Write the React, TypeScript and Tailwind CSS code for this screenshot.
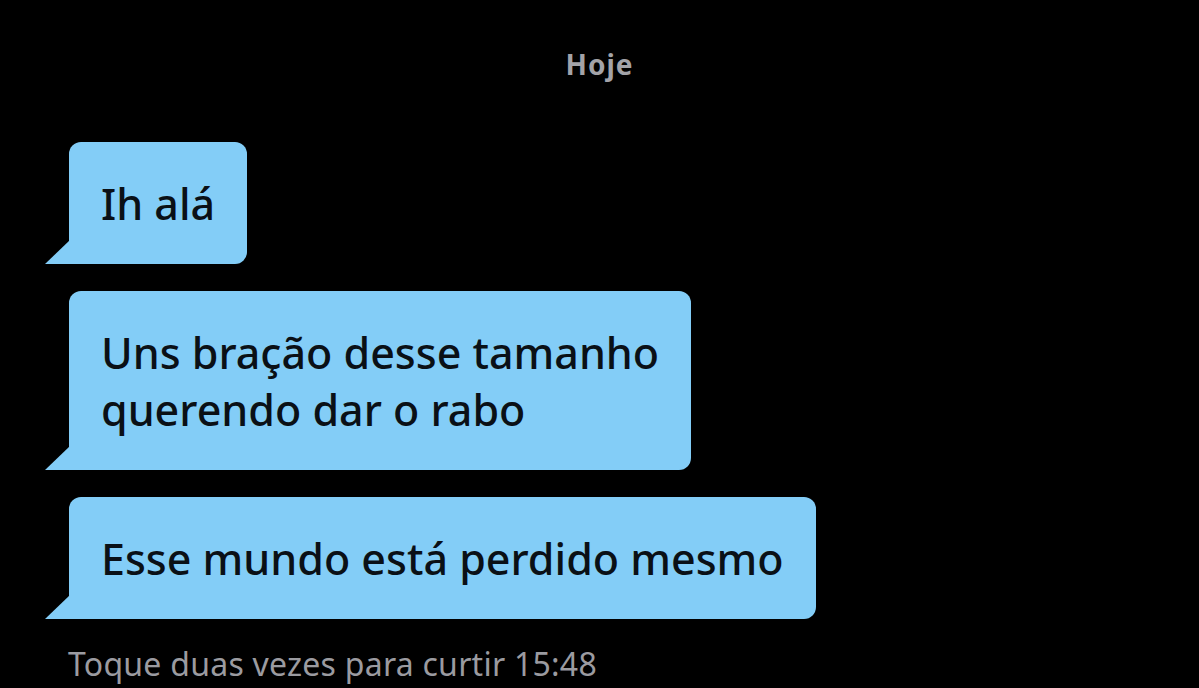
import React from "react";

function Bubble({ children }: { children: React.ReactNode }) {
  return (
    <div className="relative self-start">
      <div className="rounded-[12px] rounded-bl-none bg-[#83cdf7] px-[32px] pt-[33px] pb-[32px] text-[43px] leading-[57px] font-medium text-[#0a1016]">
        {children}
      </div>
      <svg
        className="absolute bottom-0 left-[-24px]"
        width="25"
        height="24"
        viewBox="0 0 25 24"
      >
        <polygon points="0,24 25,24 25,0" fill="#83cdf7" />
      </svg>
    </div>
  );
}

export default function App() {
  return (
    <div
      className="w-[1199px] h-[688px] bg-black overflow-hidden flex flex-col"
      style={{ fontFamily: '"Noto Sans", "Open Sans", sans-serif' }}
    >
      <div className="pt-[47px] text-center text-[28px] leading-[34px] tracking-[1px] font-bold text-[#a3a3a8]">
        Hoje
      </div>
      <div className="mt-[61px] pl-[69px] flex flex-col gap-[27px]">
        <Bubble>Ih alá</Bubble>
        <Bubble>
          Uns bração desse tamanho
          <br />
          querendo dar o rabo
        </Bubble>
        <Bubble>Esse mundo está perdido mesmo</Bubble>
      </div>
      <div className="mt-[27px] pl-[68px] text-[32px] leading-[36px] tracking-[0.25px] text-[#9b9ba0]">
        Toque duas vezes para curtir 15:48
      </div>
    </div>
  );
}
